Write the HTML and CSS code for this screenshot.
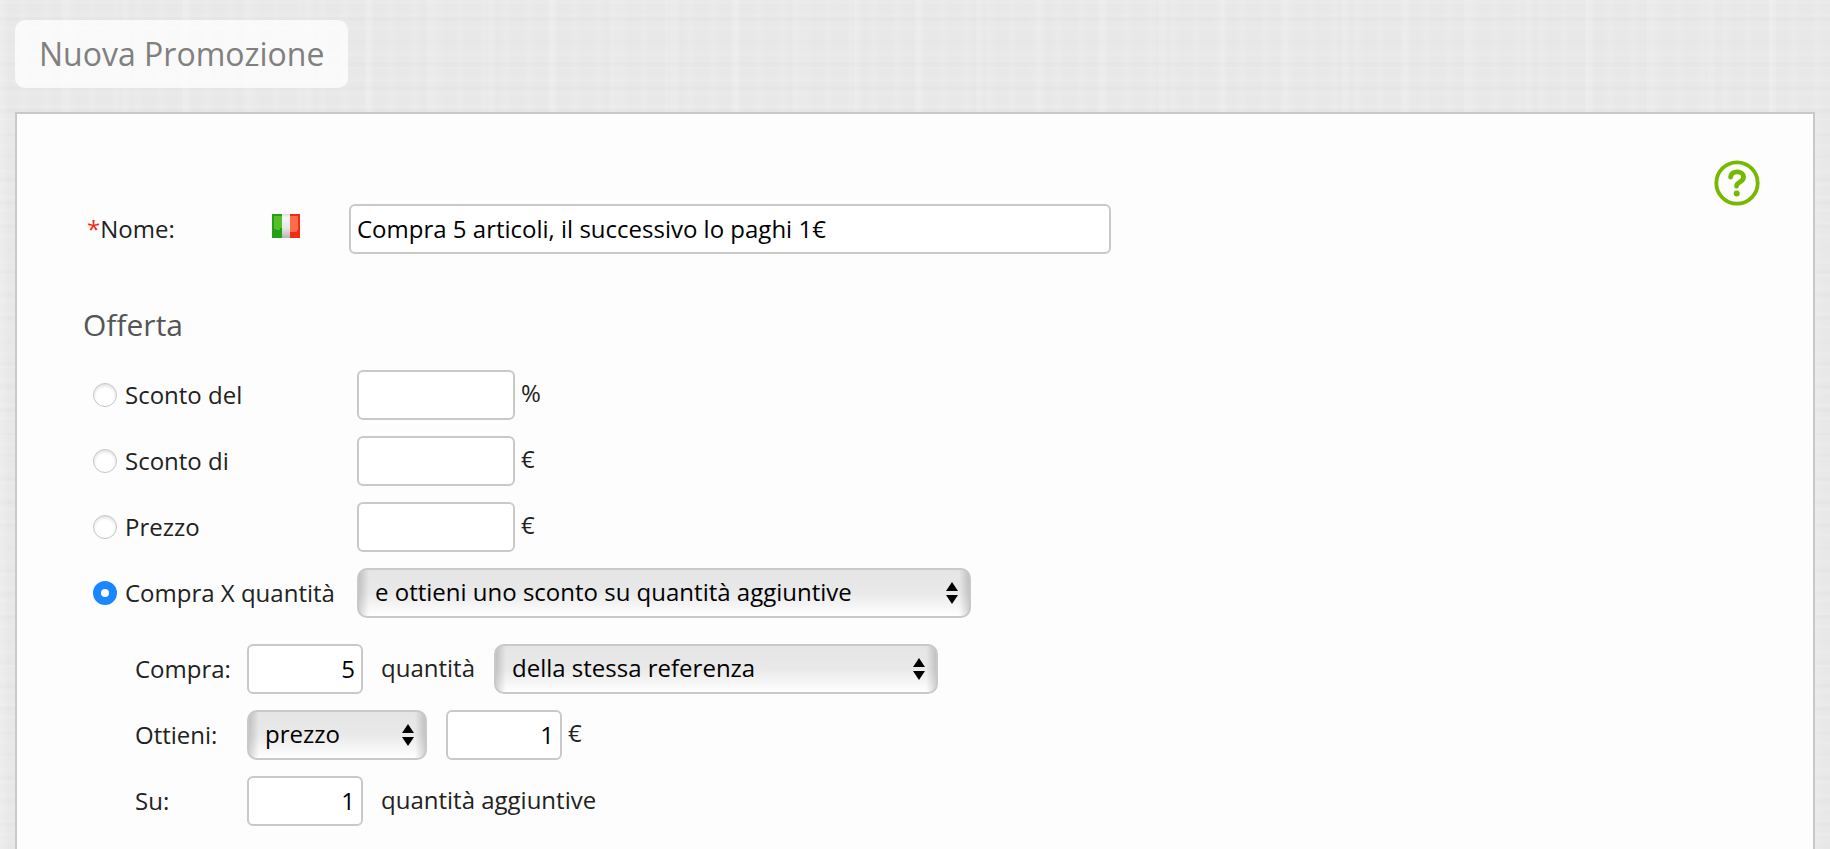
FILE: index.html
```html
<!DOCTYPE html>
<html lang="it">
<head>
    <meta charset="utf-8">
    <title>Nuova Promozione</title>
    <link rel="stylesheet" href="styles.css">
</head>
<body>
    <header>
        <h1>Nuova Promozione</h1>
    </header>

    <main class="panel">
        <button type="button" class="help" aria-label="Aiuto">
            <svg viewBox="0 0 46 46" width="46" height="46" fill="none" stroke="currentColor">
                <circle cx="23" cy="23" r="20.7" stroke-width="3.8"/>
                <path d="M16.6 17.2C17.2 13.4 19.8 11.9 23.2 11.9c3.8 0 6.4 2 6.4 5.1 0 5-6.8 5-7.1 9.2" stroke-width="4.8" stroke-linecap="round"/>
                <circle cx="22.7" cy="33.4" r="3" fill="currentColor" stroke="none"/>
            </svg>
        </button>

        <form>
            <div class="name-row">
                <label for="name"><span class="required">*</span>Nome:</label>
                <svg class="flag" viewBox="0 0 28 24" width="28" height="24">
                    <defs>
                        <linearGradient id="white" x1="0" y1="0" x2="0" y2="1">
                            <stop offset="0" stop-color="#dcdcdc"/>
                            <stop offset=".15" stop-color="#f6f6f6"/>
                            <stop offset=".6" stop-color="#e6e6e6"/>
                            <stop offset="1" stop-color="#b4b4b4"/>
                        </linearGradient>
                    </defs>
                    <path fill="#24a016" d="M0 0h10v24H0z"/>
                    <path fill="#55bf2a" d="M2 2h8v12H8v2H4v-1H2z"/>
                    <path fill="url(#white)" d="M10 0h8v24h-8z"/>
                    <path fill="#f22c12" d="M18 0h10v24H18z"/>
                    <path fill="#ff6b48" d="M18 2h8v14h-1v2h-7z"/>
                </svg>
                <input type="text" id="name" class="field" value="Compra 5 articoli, il successivo lo paghi 1€">
            </div>

            <h2>Offerta</h2>

            <div class="options">
                <div class="row">
                    <label class="choice"><input type="radio" name="offer">Sconto del</label>
                    <input type="text" class="field amount" aria-label="Sconto in percentuale">
                    <span class="unit">%</span>
                </div>
                <div class="row">
                    <label class="choice"><input type="radio" name="offer">Sconto di</label>
                    <input type="text" class="field amount" aria-label="Sconto in euro">
                    <span class="unit">€</span>
                </div>
                <div class="row">
                    <label class="choice"><input type="radio" name="offer">Prezzo</label>
                    <input type="text" class="field amount" aria-label="Prezzo in euro">
                    <span class="unit">€</span>
                </div>
                <div class="row">
                    <label class="choice"><input type="radio" name="offer" checked>Compra X quantità</label>
                    <div class="select offer-type">
                        <select aria-label="Tipo di offerta">
                            <option>e ottieni uno sconto su quantità aggiuntive</option>
                        </select>
                        <svg viewBox="0 0 12 22" width="12" height="22"><path d="M6 0l6 9H0zM6 22l6-9H0z"/></svg>
                    </div>
                </div>
            </div>

            <div class="details">
                <div class="row">
                    <label class="caption" for="buy">Compra:</label>
                    <input type="text" id="buy" class="field quantity" value="5">
                    <span class="note">quantità</span>
                    <div class="select reference">
                        <select aria-label="Referenza">
                            <option>della stessa referenza</option>
                        </select>
                        <svg viewBox="0 0 12 22" width="12" height="22"><path d="M6 0l6 9H0zM6 22l6-9H0z"/></svg>
                    </div>
                </div>
                <div class="row">
                    <label class="caption" for="get">Ottieni:</label>
                    <div class="select price">
                        <select id="get">
                            <option>prezzo</option>
                        </select>
                        <svg viewBox="0 0 12 22" width="12" height="22"><path d="M6 0l6 9H0zM6 22l6-9H0z"/></svg>
                    </div>
                    <input type="text" class="field quantity price-value" value="1" aria-label="Prezzo scontato">
                    <span class="unit">€</span>
                </div>
                <div class="row">
                    <label class="caption" for="on">Su:</label>
                    <input type="text" id="on" class="field quantity" value="1">
                    <span class="note">quantità aggiuntive</span>
                </div>
            </div>
        </form>
    </main>
</body>
</html>
```
FILE: styles.css
```css
:root {
    --text-color: #222;
    --border-color: #c9c9c9;
    --panel-color: #fdfdfd;
    --accent-color: #1a86ff;
    --help-color: #76b900;
}

* {
    margin: 0;
    padding: 0;
    box-sizing: border-box;
}

/* linen texture */
body {
    min-height: 100vh;
    display: flex;
    flex-direction: column;
    padding: 20px 15px 0;
    font-family: 'Open Sans', 'Noto Sans', sans-serif;
    font-size: 24px;
    line-height: 32px;
    color: var(--text-color);
    background-color: #e8e8e8;
    background-image:
        repeating-linear-gradient(90deg, rgba(255, 255, 255, 0.1), transparent 7px 17px, rgba(255, 255, 255, 0.1) 23px),
        repeating-linear-gradient(90deg, rgba(255, 255, 255, 0.12) 0 5px, transparent 9px 61px),
        repeating-linear-gradient(0deg, rgba(255, 255, 255, 0.08) 0 2px, transparent 5px 13px),
        repeating-linear-gradient(0deg, rgba(0, 0, 0, 0.01) 0 4px, transparent 4px 23px);
}

header {
    display: flex;
    margin-bottom: 24px;
}

h1 {
    padding: 14px 24px;
    border-radius: 10px;
    background: rgba(255, 255, 255, 0.75);
    color: #808080;
    font-size: 32px;
    line-height: 40px;
    font-weight: 400;
}

.panel {
    flex: 1;
    padding: 46px 53px 20px 66px;
    border: 2px solid var(--border-color);
    border-bottom: 0;
    background: var(--panel-color);
}

.help {
    display: block;
    width: 46px;
    height: 46px;
    margin-left: auto;
    border: 0;
    border-radius: 50%;
    background: none;
    color: var(--help-color);
    cursor: pointer;
}

.help svg {
    display: block;
}

.name-row {
    display: grid;
    grid-template-columns: 185px 77px minmax(0, 762px);
    align-items: center;
    margin-top: -2px;
    padding-left: 4px;
}

.required {
    color: #f3290f;
}

.flag {
    margin-bottom: 6px;
}

.field {
    height: 50px;
    padding: 0 6px 2px;
    border: 2px solid var(--border-color);
    border-radius: 6px;
    background: #fff;
    color: #000;
    font: inherit;
}

h2 {
    margin: 50px 0 24px;
    color: #555;
    font-size: 30px;
    line-height: 42px;
    font-weight: 400;
}

.options,
.details {
    display: flex;
    flex-direction: column;
    gap: 16px;
}

.options {
    padding-left: 10px;
}

.details {
    margin-top: 26px;
    padding-left: 52px;
}

.row {
    display: flex;
    align-items: center;
}

.choice {
    display: flex;
    align-items: center;
    gap: 8px;
    width: 264px;
}

.choice input {
    appearance: none;
    width: 24px;
    height: 24px;
    border: 1px solid #c4c4c4;
    border-radius: 50%;
    background: #fff;
    box-shadow: inset 0 2px 3px rgba(0, 0, 0, 0.12);
}

.choice input:checked {
    border: 8px solid var(--accent-color);
    box-shadow: none;
}

.amount {
    width: 158px;
}

.unit {
    margin-left: 6px;
    padding-bottom: 4px;
}

.caption {
    width: 112px;
}

.quantity {
    width: 116px;
    text-align: right;
}

.price-value {
    margin-left: 19px;
}

.note {
    width: 131px;
    padding: 0 0 2px 18px;
    white-space: nowrap;
}

/* the arrows share the single grid cell with the select */
.select {
    display: grid;
    align-items: center;
}

.select select,
.select svg {
    grid-area: 1 / 1;
}

.select svg {
    justify-self: end;
    margin-right: 13px;
    pointer-events: none;
}

.select select {
    appearance: none;
    width: 100%;
    height: 50px;
    padding: 0 36px 2px 16px;
    border: 2px solid var(--border-color);
    border-radius: 10px;
    background:
        linear-gradient(90deg, rgba(0, 0, 0, 0.16), transparent) left / 10px 100% no-repeat,
        linear-gradient(270deg, rgba(0, 0, 0, 0.16), transparent) right / 10px 100% no-repeat,
        linear-gradient(#e5e5e5, #e9e9e9 50%, #fff);
    color: #000;
    font: inherit;
}

.offer-type {
    width: 614px;
}

.reference {
    width: 444px;
}

.price {
    width: 180px;
}
```
